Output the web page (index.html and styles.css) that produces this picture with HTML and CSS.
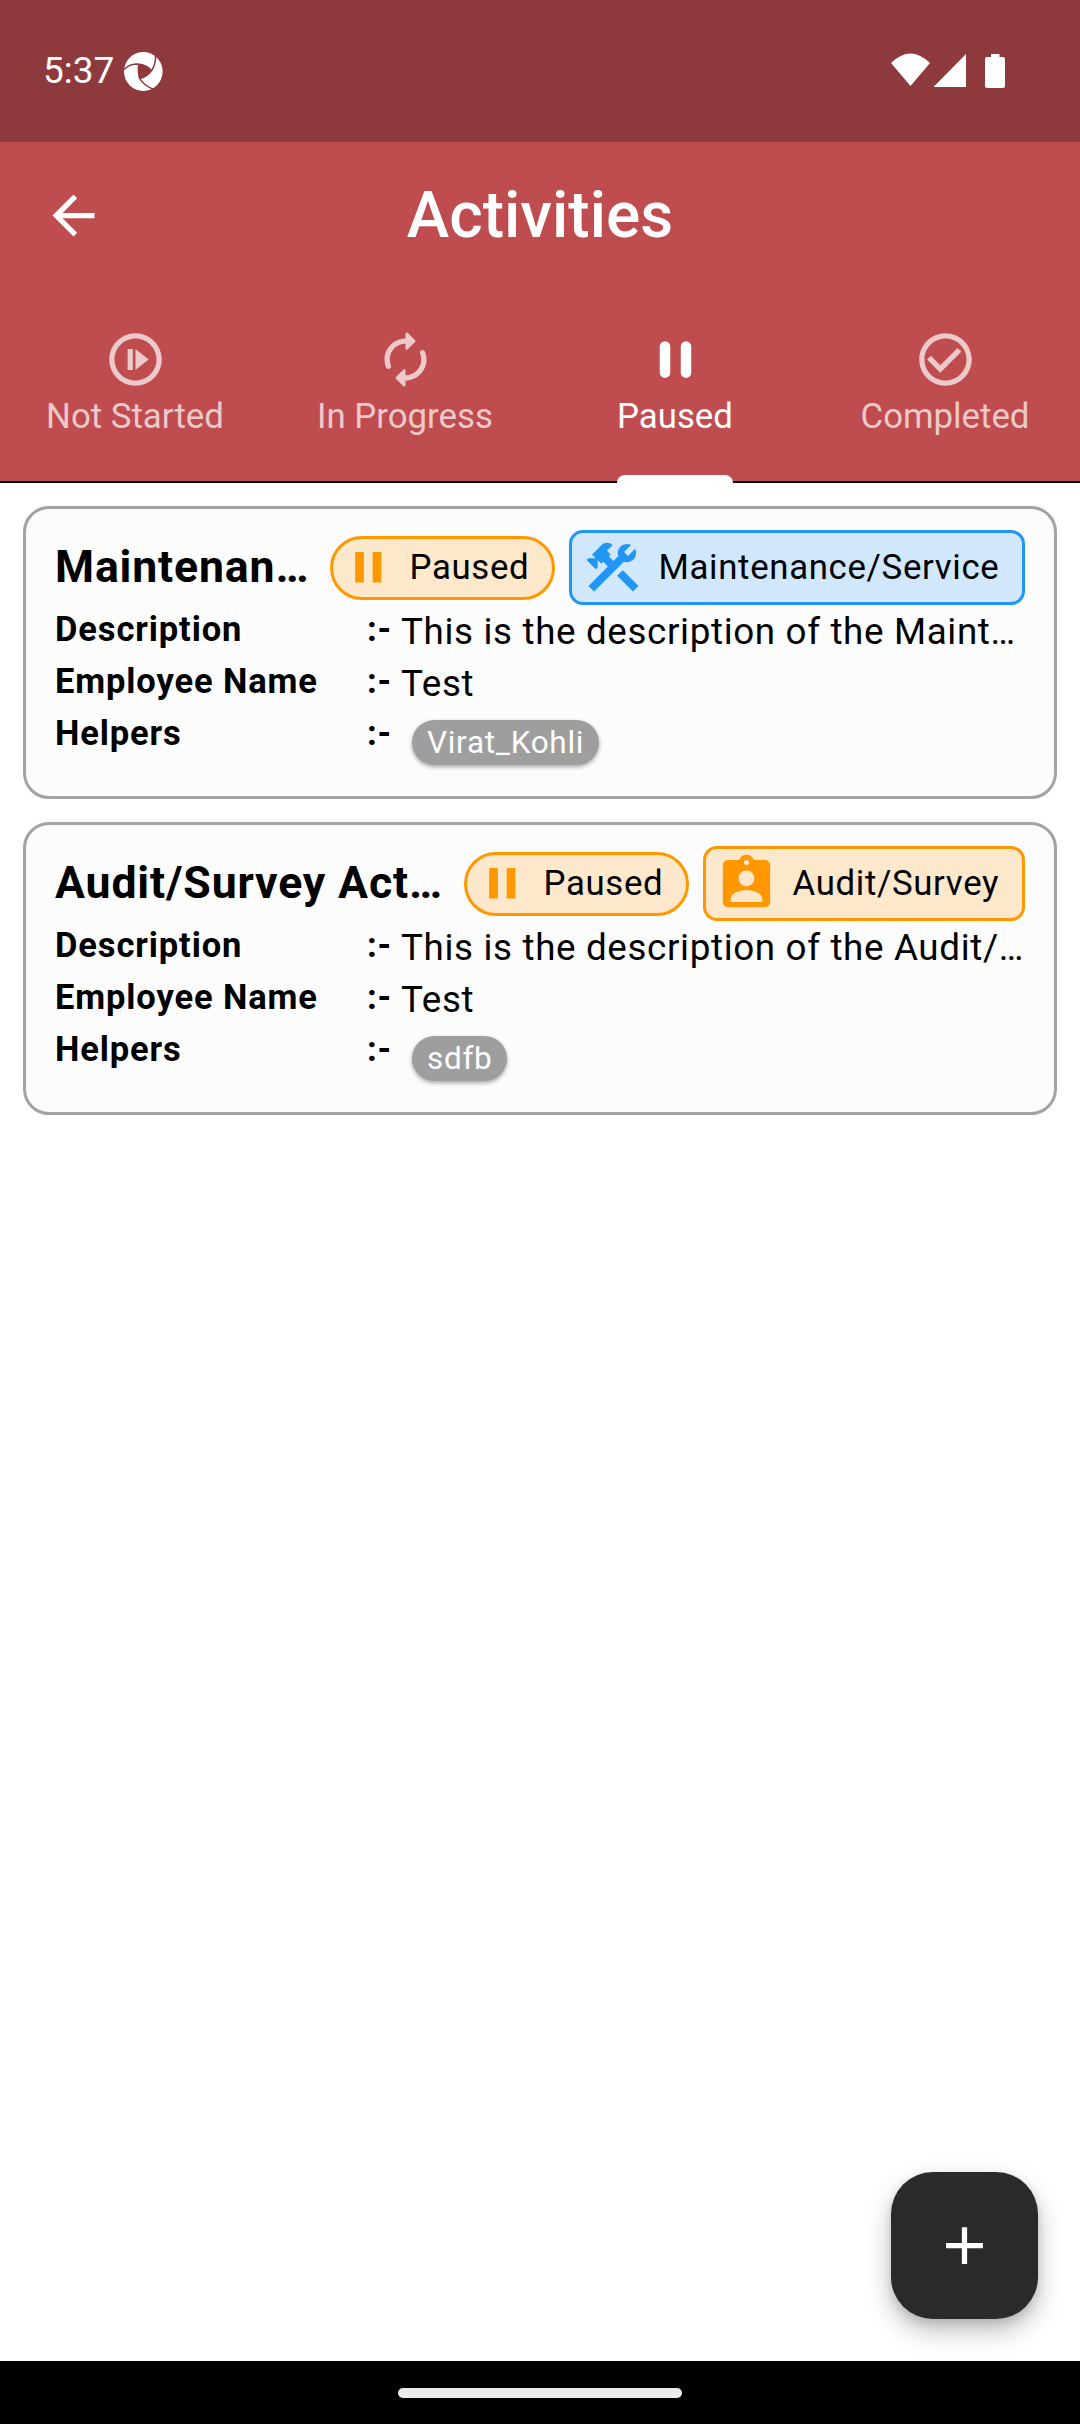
FILE: index.html
```html
<!DOCTYPE html>
<html lang="en">
<head>
<meta charset="utf-8">
<title>Activities</title>
<link rel="stylesheet" href="styles.css">
</head>
<body>
<div class="screen">
  <header class="status-bar">
    <span class="clock">5:37</span>
    <svg class="swirl" viewBox="0 0 39 39"><ellipse cx="19.3" cy="19.500" rx="19.300" ry="19.500" fill="#fff"/><g fill="none" stroke="#8e393c" stroke-width="1.500"><path d="M0 17.500Q5 12 14 12Q23 13 27.500 18.500"/><path d="M31.500 2Q32 12 28 18Q23 25 15.500 26.500"/><path d="M30 37.500Q19 33 15.500 26Q13.500 18 15 12"/></g><path d="M15 12.500Q23 13 27.500 18.500Q23 25 15.500 26.500Q13.500 19 15 12.500Z" fill="#8e393c"/></svg>
    <svg class="signals" viewBox="0 0 116 36"><g fill="#fff"><path d="M0 10Q19.500-9 39 10L19.500 33Z"/><path d="M75 1V34H42.500Z"/><path d="M100 1h8.500v3h3.500q2 0 2 2v27q0 2-2 2h-16q-2 0-2-2V6q0-2 2-2h4z"/></g></svg>
  </header>
  <div class="app-bar">
    <svg class="icon back" viewBox="0 0 24 24"><path d="M20 11H7.830l5.590-5.590L12 4l-8 8 8 8 1.410-1.410L7.830 13H20v-2z"/></svg>
    <h1 class="title">Activities</h1>
  </div>
  <nav class="tabs">
    <div class="tab">
      <svg class="icon" viewBox="0 0 24 24"><path d="M12 2C6.480 2 2 6.480 2 12s4.480 10 10 10 10-4.480 10-10S17.520 2 12 2zm0 18c-4.410 0-8-3.590-8-8s3.590-8 8-8 8 3.590 8 8-3.590 8-8 8zM11 8v8H9V8h2zM17 12l-5 4V8l5 4z"/></svg>
      <span>Not Started</span>
    </div>
    <div class="tab">
      <svg class="icon" viewBox="0 0 24 24"><path d="M12 6v1.790c0 .45.54.67.85.35l2.790-2.790c.2-.2.2-.51 0-.71l-2.790-2.790c-.31-.31-.85-.09-.85.36V4c-4.420 0-8 3.580-8 8 0 1.040.2 2.040.57 2.950.27.67 1.130.85 1.640.34.27-.27.38-.68.23-1.040C6.150 13.560 6 12.790 6 12c0-3.310 2.690-6 6-6zm5.790 2.710c-.27.27-.38.69-.23 1.040.28.7.44 1.460.44 2.250 0 3.310-2.690 6-6 6v-1.790c0-.45-.54-.67-.85-.35l-2.790 2.790c-.2.2-.2.51 0 .71l2.790 2.790c.31.31.85.09.85-.35V20c4.420 0 8-3.580 8-8 0-1.040-.2-2.040-.57-2.950-.27-.67-1.130-.85-1.640-.34z"/></svg>
      <span>In Progress</span>
    </div>
    <div class="tab active">
      <svg class="icon" viewBox="0 0 24 24"><rect x="6" y="5" width="4" height="14" rx="2"/><rect x="14" y="5" width="4" height="14" rx="2"/></svg>
      <span>Paused</span>
    </div>
    <div class="tab">
      <svg class="icon" viewBox="0 0 24 24"><path d="M16.590 7.580L10 14.170l-3.590-3.580L5 12l5 5 8-8zM12 2C6.480 2 2 6.480 2 12s4.480 10 10 10 10-4.480 10-10S17.520 2 12 2zm0 18c-4.420 0-8-3.580-8-8s3.580-8 8-8 8 3.580 8 8-3.580 8-8 8z"/></svg>
      <span>Completed</span>
    </div>
  </nav>
  <main class="list">
    <article class="card">
      <div class="card-head">
        <h2 class="name">Maintenan…</h2>
        <div class="status"><svg viewBox="0 0 24 24"><path d="M6 19h4V5H6v14zm8-14v14h4V5h-4z"/></svg><span>Paused</span></div>
        <div class="kind service"><svg viewBox="0 0 24 24"><rect height="8.480" transform="matrix(0.7071 -0.7071 0.7071 0.7071 -6.8717 17.6255)" width="3" x="16.340" y="12.870"/><path d="M17.500 10c1.930 0 3.500-1.570 3.500-3.500 0-.58-.16-1.120-.41-1.600l-2.700 2.700L16.400 6.110l2.700-2.700C18.620 3.160 18.080 3 17.500 3 15.570 3 14 4.570 14 6.500c0 .41.08.8.21 1.160l-1.850 1.850-1.780-1.780.71-.71-1.410-1.410L12 3.490c-1.170-1.170-3.070-1.170-4.240 0L4.220 7.030l1.410 1.410H2.810l-.71.71 3.540 3.540.71-.71V9.150l1.410 1.410.71-.71 1.780 1.780-7.410 7.410 2.120 2.120L16.340 9.790C16.700 9.920 17.090 10 17.500 10z"/></svg><span>Maintenance/Service</span></div>
      </div>
      <dl class="details">
        <dt>Description</dt><dd class="sep">:-</dd><dd class="value">This is the description of the Maint…</dd>
        <dt>Employee Name</dt><dd class="sep">:-</dd><dd class="value">Test</dd>
        <dt>Helpers</dt><dd class="sep">:-</dd><dd class="helpers"><span class="chip">Virat_Kohli</span></dd>
      </dl>
    </article>
    <article class="card">
      <div class="card-head">
        <h2 class="name">Audit/Survey Act…</h2>
        <div class="status"><svg viewBox="0 0 24 24"><path d="M6 19h4V5H6v14zm8-14v14h4V5h-4z"/></svg><span>Paused</span></div>
        <div class="kind audit"><svg viewBox="0 0 24 24"><path d="M19 3h-4.180C14.400 1.840 13.300 1 12 1c-1.300 0-2.400.84-2.820 2H5c-1.100 0-2 .9-2 2v14c0 1.100.9 2 2 2h14c1.100 0 2-.9 2-2V5c0-1.100-.9-2-2-2zm-7 0c.55 0 1 .45 1 1s-.45 1-1 1-1-.45-1-1 .45-1 1-1zm0 4c1.660 0 3 1.340 3 3s-1.340 3-3 3-3-1.340-3-3 1.340-3 3-3zm6 12H6v-1.400c0-2 4-3.100 6-3.100s6 1.100 6 3.100V19z"/></svg><span>Audit/Survey</span></div>
      </div>
      <dl class="details">
        <dt>Description</dt><dd class="sep">:-</dd><dd class="value">This is the description of the Audit/…</dd>
        <dt>Employee Name</dt><dd class="sep">:-</dd><dd class="value">Test</dd>
        <dt>Helpers</dt><dd class="sep">:-</dd><dd class="helpers"><span class="chip">sdfb</span></dd>
      </dl>
    </article>
  </main>
  <button class="fab" aria-label="Add"><svg class="icon" viewBox="0 0 24 24"><path d="M19 13h-6v6h-2v-6H5v-2h6V5h2v6h6v2z"/></svg></button>
  <footer class="nav-bar"><div class="handle"></div></footer>
</div>
</body>
</html>
```
FILE: styles.css
```css
* { box-sizing: border-box; margin: 0; padding: 0; }
body { font-family: Roboto, "Liberation Sans", sans-serif; color: #000; background: #fff; }
svg { display: block; flex: none; fill: currentColor; }
.screen { position: relative; display: flex; flex-direction: column; width: 1080px; height: 2424px; background: #fff; overflow: hidden; }
.icon { width: 63px; height: 63px; }

.status-bar { display: flex; align-items: center; height: 142px; padding: 0 73px 0 43px; background: #8e393c; color: #fff; }
.clock { width: 81px; font-size: 37px; line-height: 42px; }
.swirl { width: 39px; height: 39px; }
.signals { width: 116px; height: 36px; margin-left: auto; }

.app-bar { display: grid; grid-template-columns: 63px 1fr 63px; align-items: center; height: 147px; padding: 0 42px; background: #bf4c4f; color: #fff; }
.title { padding-top: 1px; text-align: center; font-size: 64px; font-weight: 500; line-height: 74px; }

.tabs { display: grid; grid-template-columns: repeat(4, 1fr); height: 194px; background: #bf4c4f; border-bottom: 2px solid #000; }
.tab { position: relative; display: flex; flex-direction: column; align-items: center; padding-top: 39px; color: #edc9ca; font-size: 34.800px; line-height: 41px; }
.tab span { margin-top: 5px; }
.tab.active { color: #fff; }
.tab.active::after { content: ""; position: absolute; bottom: -2px; width: 116px; height: 8px; border-radius: 8px 8px 0 0; background: #fff; }

.list { display: flex; flex-direction: column; gap: 23px; flex: 1; padding: 23px 23px 0; }
.card { height: 293px; padding: 21px 29px; border: 3px solid #a3a3a3; border-radius: 26px; background: #fcfcfc; }
.card-head { display: flex; align-items: center; height: 75px; }
.name { flex: 1; padding-bottom: 2px; font-size: 44.600px; font-weight: 700; letter-spacing: .850px; white-space: nowrap; }
.status, .kind { display: flex; align-items: center; border: 3px solid; font-size: 34.800px; letter-spacing: .656px; white-space: nowrap; }
.status span, .kind span { padding-bottom: 2px; color: #000; }
.status { width: 225px; height: 64px; padding-left: 9px; gap: 15px; border-radius: 32px; background: #fee8cb; color: #ff9800; }
.status svg { width: 52.500px; height: 52.500px; }
.kind { height: 75px; margin-left: 14px; padding-left: 9px; gap: 14.500px; border-radius: 14px; }
.kind svg { width: 63px; height: 63px; }
.service { width: 456px; background: #d1e7fb; color: #2196f3; }
.audit { width: 322px; background: #fee8cb; color: #ff9800; }

.details { display: grid; grid-template-columns: 312px 34px 1fr; grid-template-rows: 52px 52px 60px; }
.details dt, .sep { font-size: 34.500px; font-weight: 700; line-height: 49px; letter-spacing: .880px; }
.value { font-size: 36.750px; line-height: 54px; letter-spacing: .656px; white-space: nowrap; }
.helpers { padding: 11px 0 0 11px; }
.chip { display: inline-block; height: 45px; padding: 0 15px; border-radius: 23px; background: #9e9e9e; color: #fff; font-size: 31.500px; line-height: 45px; letter-spacing: .7px; box-shadow: 0 2px 4px rgba(0,0,0,.35); }

.fab { position: absolute; left: 891px; top: 2172px; display: grid; place-items: center; width: 147px; height: 147px; border: 0; border-radius: 42px; background: #2c2a28; color: #fff; box-shadow: 0 12px 26px rgba(0,0,0,.25), 0 4px 10px rgba(0,0,0,.12); }
.nav-bar { display: flex; justify-content: center; height: 63px; padding-top: 27px; background: #000; }
.handle { width: 284px; height: 10px; border-radius: 5px; background: #ebebeb; }
```
